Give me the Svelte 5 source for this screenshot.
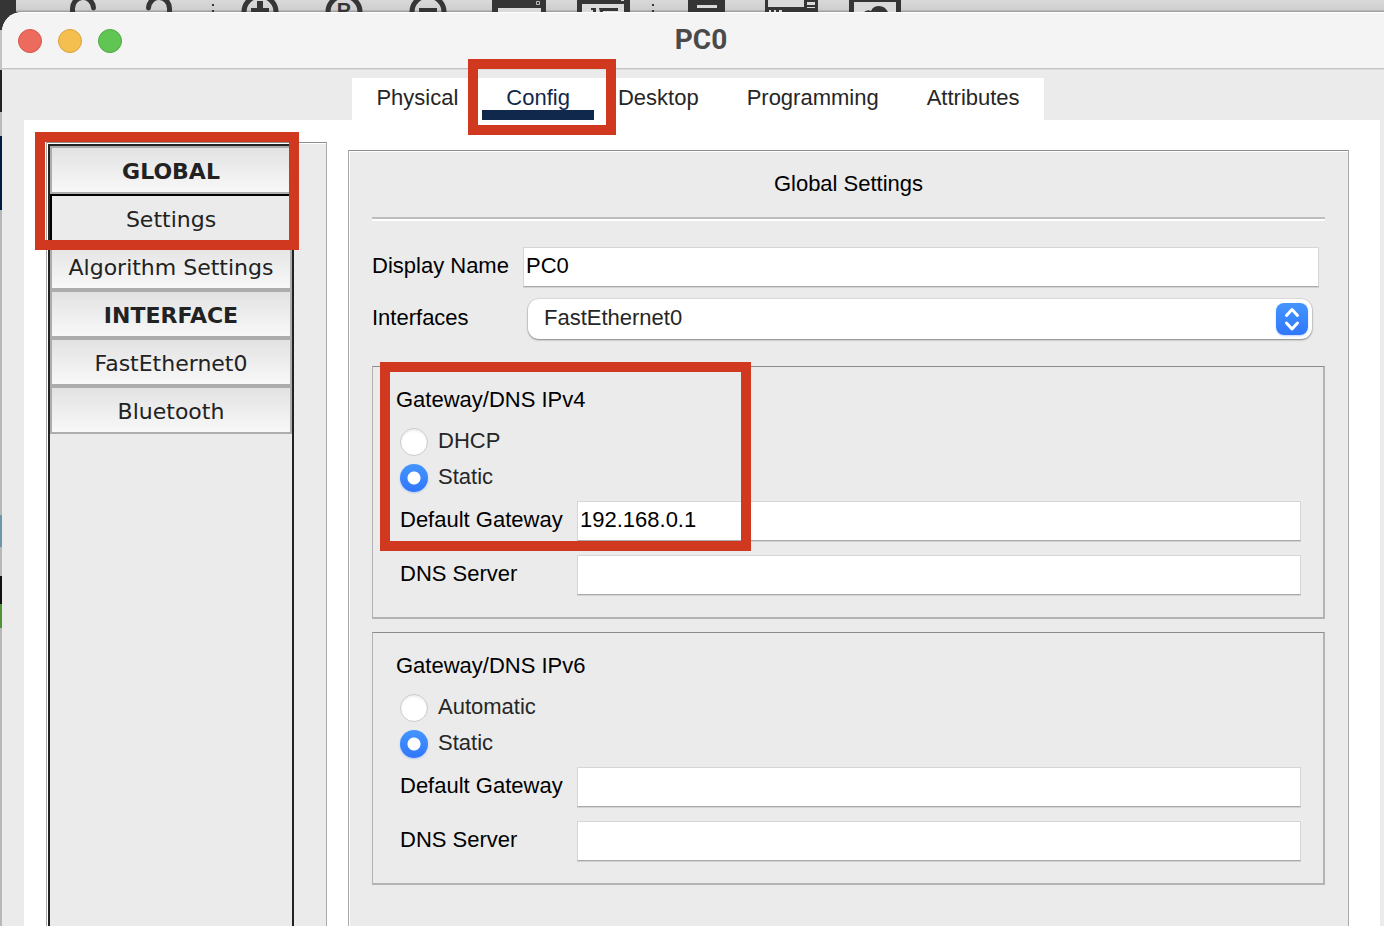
<script>
  const tabs = ['Physical', 'Config', 'Desktop', 'Programming', 'Attributes'];
  let activeTab = $state('Config');
  let displayName = $state('PC0');
  let selectedPage = $state('Settings');

  const pinned = [
    { label: 'GLOBAL', heading: true },
    { label: 'Settings' }
  ];
  const others = [
    { label: 'Algorithm Settings' },
    { label: 'INTERFACE', heading: true },
    { label: 'FastEthernet0' },
    { label: 'Bluetooth' }
  ];

  let groups = $state([
    { id: 'v4', title: 'Gateway/DNS IPv4', auto: 'DHCP', mode: 'static', gateway: '192.168.0.1', dns: '', marked: true },
    { id: 'v6', title: 'Gateway/DNS IPv6', auto: 'Automatic', mode: 'static', gateway: '', dns: '', marked: false }
  ]);
</script>

{#snippet navItem(item)}
  <button
    type="button"
    class="nav-item"
    class:heading={item.heading}
    class:selected={item.label === selectedPage}
    onclick={() => { if (!item.heading) selectedPage = item.label; }}
  >{item.label}</button>
{/snippet}

<div class="desktop">
  <div class="toolbar" aria-hidden="true">
    <svg width="920" height="12" viewBox="0 0 920 12" fill="#353535">
      <path d="M0 0H16V12H0z" />
      <g fill="none" stroke="#353535" stroke-width="5">
        <path d="M72.500 13V9A10.500 11 0 0 1 93.500 8" stroke-linecap="round" />
        <path d="M169.500 13V9A10.500 11 0 0 0 148.500 8" stroke-linecap="round" />
        <circle cx="260" cy="12" r="16" />
        <circle cx="344" cy="12" r="16" />
        <circle cx="428" cy="12" r="16" />
      </g>
      <path d="M257 1h6v7h6v4h-18V8h6zM419 8h18v4h-18z" />
      <text x="344" y="17" text-anchor="middle" font-family="Liberation Sans" font-size="20" font-weight="700">R</text>
      <path d="M212 4h2v2h-2zM212 10h2v2h-2zM652 4h2v2h-2zM652 10h2v2h-2z" />
      <path d="M492 0h54v12h-54z" />
      <path d="M498 8h43v4h-43z" fill="#dadada" />
      <path d="M536.500 1.500h3v3h-3z" fill="none" stroke="#bbb" />
      <path d="M577 0h53v12h-53z" />
      <path d="M582 4h42v8h-42zM621 0h3v1h-3z" fill="#dadada" />
      <path d="M591 8h5v4h-3v-2h-2zM599 8h19v3h-15v1h-3z" />
      <path d="M688 0h37v12h-37z" />
      <path d="M697 5h20v3h-20z" fill="#dadada" />
      <path d="M765 0h53v12h-53z" />
      <path d="M768 0h36v7h-36zM807 2h8v3h-8zM807 7h8v1h-8zM769 10h2v2h-2zM774 10h2v2h-2zM779 10h3v2h-3z" fill="#dadada" />
      <path d="M849 0h52v12h-52z" />
      <path d="M854 2h42v10h-42z" fill="#dadada" />
      <path d="M864 12q4-3 7-1q2-5 8-5t9 6z" />
    </svg>
  </div>

  <div class="window">
    <header class="titlebar">
      <div class="lights">
        <button type="button" class="light red" aria-label="Close"></button>
        <button type="button" class="light yellow" aria-label="Minimize"></button>
        <button type="button" class="light green" aria-label="Zoom"></button>
      </div>
      <h1>PC0</h1>
    </header>

    <nav class="tabbar">
      <div class="tabs" role="tablist">
        {#each tabs as tab}
          <div class="tab-slot">
            <button
              type="button"
              role="tab"
              class="tab"
              class:active={tab === activeTab}
              aria-selected={tab === activeTab}
              onclick={() => (activeTab = tab)}
            >{tab}</button>
            {#if tab === 'Config'}<span class="marker on-tab"></span>{/if}
          </div>
        {/each}
      </div>
    </nav>

    <main class="content">
      <aside class="side">
        <div class="nav-list">
          <div class="pinned">
            {#each pinned as item}{@render navItem(item)}{/each}
            <span class="marker on-nav"></span>
          </div>
          {#each others as item}{@render navItem(item)}{/each}
        </div>
      </aside>

      <section class="panel">
        <h2>Global Settings</h2>
        <hr />
        <div class="field top">
          <label for="display-name">Display Name</label>
          <input id="display-name" type="text" bind:value={displayName} />
        </div>
        <div class="field top choice">
          <label for="interfaces">Interfaces</label>
          <div class="select-wrap">
            <select id="interfaces"><option>FastEthernet0</option></select>
            <span class="stepper">
              <svg width="32" height="32" viewBox="0 0 32 32" fill="none" stroke="#fff" stroke-width="3" stroke-linecap="round" stroke-linejoin="round">
                <path d="M10.500 12.500L16 6.500L21.500 12.500M10.500 20L16 26L21.500 20" />
              </svg>
            </span>
          </div>
        </div>

        {#each groups as group}
          <div class="group" role="group" aria-labelledby="{group.id}-title">
            <h3 id="{group.id}-title">{group.title}</h3>
            <label class="option">
              <input type="radio" name={group.id} value="auto" bind:group={group.mode} />
              <span>{group.auto}</span>
            </label>
            <label class="option">
              <input type="radio" name={group.id} value="static" bind:group={group.mode} />
              <span>Static</span>
            </label>
            <div class="field">
              <label for="{group.id}-gateway">Default Gateway</label>
              <input id="{group.id}-gateway" type="text" bind:value={group.gateway} />
            </div>
            <div class="field">
              <label for="{group.id}-dns">DNS Server</label>
              <input id="{group.id}-dns" type="text" bind:value={group.dns} />
            </div>
            {#if group.marked}<span class="marker on-group"></span>{/if}
          </div>
        {/each}
      </section>
    </main>
  </div>
</div>

<style>
  :global(body) {
    margin: 0;
  }
  .desktop, .desktop * {
    box-sizing: border-box;
  }
  .desktop {
    display: flex;
    flex-direction: column;
    min-height: 100vh;
    font: 22px/28px "Liberation Sans", Arial, sans-serif;
    color: #000;
    background: linear-gradient(#353535 0 30px, #c4c4c4 30px 70px, #222 70px 112px, #bbb 112px 136px, #001c44 136px 210px, #b8b8b8 210px 515px, #6b97aa 515px 547px, #b8b8b8 547px 576px, #111 576px 604px, #4f9433 604px 628px, #b8b8b8 628px);
  }
  button, input, select {
    font: inherit;
    color: inherit;
  }
  h1, h2, h3 {
    margin: 0;
    font-weight: 400;
    font-size: inherit;
  }
  .toolbar {
    flex: none;
    height: 12px;
    overflow: hidden;
    background: linear-gradient(#d9d9d9 0, #cecece 10px, #a0a0a0 11px);
  }
  .toolbar svg {
    display: block;
  }
  .window {
    flex: 1;
    display: flex;
    flex-direction: column;
    margin-left: 2px;
    border-radius: 20px 0 0 0;
    background: #ebebeb;
  }
  .titlebar {
    display: grid;
    grid-template-columns: 108px 1fr 108px;
    align-items: center;
    flex: none;
    height: 57px;
    padding-left: 16px;
    border-top: 1px solid #fff;
    border-bottom: 1px solid #c3c3c3;
    border-radius: 20px 0 0 0;
    background: #f4f4f4;
    box-shadow: 0 1px #dcdcdc;
  }
  .lights {
    display: flex;
    gap: 16px;
  }
  .light {
    width: 24px;
    height: 24px;
    padding: 0;
    border: 1px solid;
    border-radius: 50%;
  }
  .red { background: #ed6a5e; border-color: #d5564b; }
  .yellow { background: #f5bf4f; border-color: #d9a040; }
  .green { background: #61c554; border-color: #4ca842; }
  .titlebar h1 {
    padding-bottom: 2px;
    font-family: Roboto, sans-serif;
    font-size: 28px;
    font-weight: 700;
    line-height: 32px;
    color: #4a4a4a;
    text-align: center;
  }
  .tabbar {
    display: flex;
    justify-content: center;
    flex: none;
    padding: 9px 12px 0 22px;
  }
  .tabs {
    display: flex;
    height: 42px;
    background: #fff;
  }
  .tab-slot {
    position: relative;
    display: flex;
  }
  .tab {
    padding: 6px 24px 0;
    border: 0;
    border-bottom: 10px solid transparent;
    background: none;
    color: #262626;
  }
  .tab.active {
    color: #10284b;
    border-bottom-color: #10284b;
  }
  .marker {
    position: absolute;
    z-index: 2;
    border: 10px solid #d13820;
    pointer-events: none;
  }
  .on-tab { inset: -19px -22px -15px -14px; }
  .on-nav { inset: -14px -7px -8px -15px; }
  .on-group { top: -5px; left: 7px; width: 371px; height: 189px; }
  .content {
    flex: 1;
    display: grid;
    grid-template-columns: 281px 1fr;
    column-gap: 21px;
    margin: 0 4px 0 22px;
    padding: 22px 31px 0 22px;
    background: #fff;
  }
  .side {
    display: flex;
    padding: 1px 32px 0 1px;
    border: solid #aaa;
    border-width: 1px 1px 0 1px;
    border-top-color: #8c8c8c;
    background: #ebebeb;
    box-shadow: inset 1px 1px #fff;
  }
  .nav-list {
    flex: 1;
    border: 2px solid #222;
    border-bottom: 0;
    font-family: "DejaVu Sans", Verdana, sans-serif;
    color: #222;
  }
  .pinned {
    position: relative;
  }
  .nav-item {
    display: block;
    width: 100%;
    height: 48px;
    padding: 4px 0 0;
    border: 2px solid #adadad;
    background: linear-gradient(#e2e2e2, #f8f8f8);
    text-align: center;
  }
  .heading {
    font-weight: 700;
  }
  .selected {
    border-color: #000 #fff #fff #000;
    background: #ebebeb;
  }
  .panel {
    margin-top: 8px;
    padding: 19px 23px 0;
    border: solid #aaa;
    border-width: 1px 1px 0 1px;
    border-top-color: #8c8c8c;
    background: #ebebeb;
    box-shadow: inset 1px 1px #fff;
  }
  h2 {
    text-align: center;
  }
  hr {
    height: 4px;
    margin: 19px 0 26px;
    border: 0;
    border-top: 2px solid #bdbdbd;
    background: #fff;
  }
  .field {
    display: grid;
    grid-template-columns: 177px 1fr;
    margin: 0 22px 14px 4px;
  }
  .field label {
    line-height: 38px;
    white-space: nowrap;
  }
  .field input {
    width: 100%;
    min-width: 0;
    height: 40px;
    padding: 0 2px 3px;
    border: 1px solid #d6d6d6;
    border-bottom-color: #aaa;
    border-radius: 0;
    outline: 0;
    background: #fff;
    box-shadow: 0 1px #d2d2d2;
  }
  .top {
    grid-template-columns: 151px 1fr;
    margin: 0 6px 12px 0;
  }
  .choice {
    margin-bottom: 27px;
  }
  .select-wrap {
    position: relative;
    margin: 0 7px 0 5px;
  }
  select {
    display: block;
    width: 100%;
    height: 40px;
    padding: 0 44px 3px 16px;
    border: 0;
    border-radius: 11px;
    appearance: none;
    background: #fff;
    color: #262626;
    box-shadow: 0 0 1px 1px #0001, 0 1px 2px #0006;
  }
  .stepper {
    position: absolute;
    top: 4px;
    right: 4px;
    width: 32px;
    height: 32px;
    border-radius: 8px;
    background: linear-gradient(#4495ff, #3077fb);
    box-shadow: 0 1px 2px #3b82f655;
    pointer-events: none;
  }
  .group {
    position: relative;
    margin-bottom: 13px;
    padding: 19px 0 8px 23px;
    border: 2px solid #b3b3b3;
    border-top: 1px solid #8c8c8c;
    border-left-width: 1px;
  }
  .group h3 {
    margin-bottom: 10px;
  }
  .option {
    display: flex;
    gap: 10px;
    width: 300px;
    height: 36px;
    padding-left: 4px;
    color: #262626;
  }
  .option span {
    line-height: 34px;
  }
  .option input {
    width: 28px;
    height: 28px;
    margin: 4px 0;
    border: 1px solid #cbcbcb;
    border-radius: 50%;
    appearance: none;
    background: #fff;
    box-shadow: inset 0 2px 2px #0001;
  }
  .option input:checked {
    border: 0;
    background: radial-gradient(circle, #fff 6px, transparent 7px), linear-gradient(#4495ff, #3077fb);
    box-shadow: 0 1px 2px #3b82f655;
  }
  .option + .field {
    margin-top: 5px;
  }
</style>
